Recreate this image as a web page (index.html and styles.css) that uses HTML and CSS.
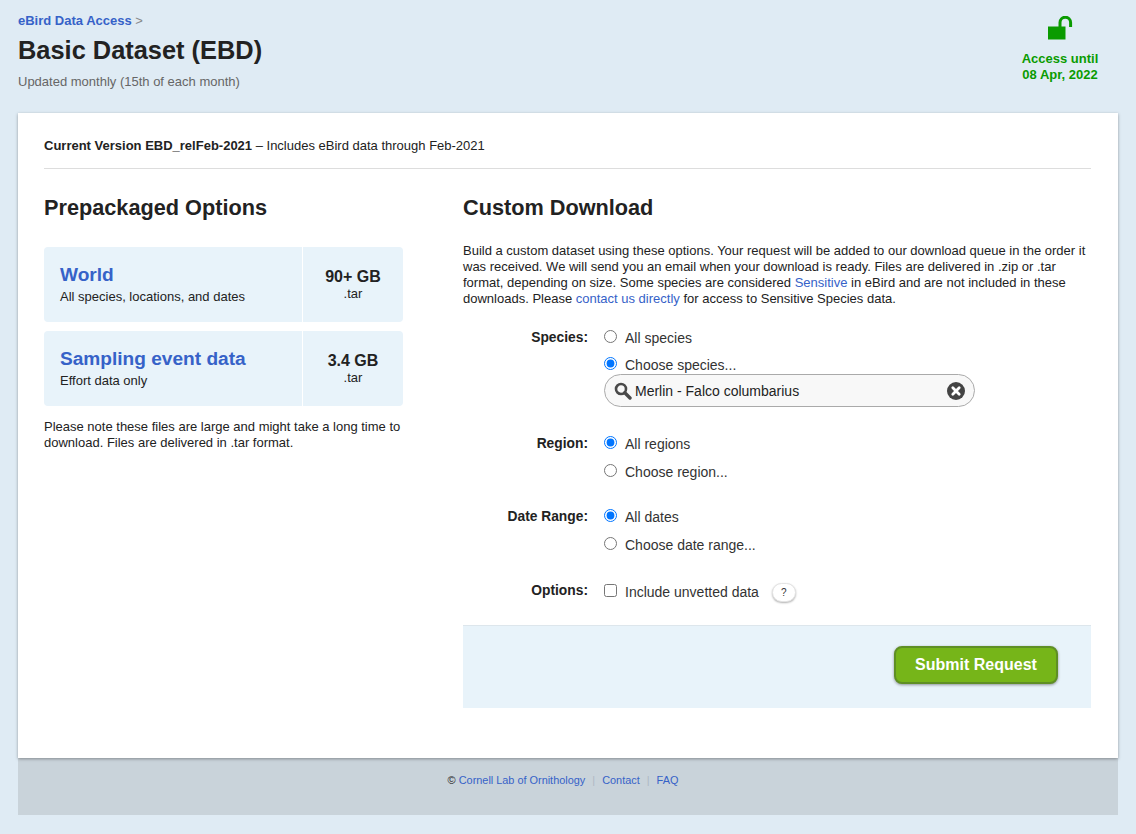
FILE: index.html
```html
<!DOCTYPE html>
<html lang="en">
  <head>
    <meta charset="UTF-8" />
    <meta name="viewport" content="width=device-width, initial-scale=1.0" />
    <title>Basic Dataset (EBD)</title>
    <link rel="stylesheet" href="styles.css">
  </head>
  <body>
    <header class="page-head">
      <div>
        <div class="crumb"><a href="#">eBird Data Access</a> &gt;</div>
        <h1>Basic Dataset (EBD)</h1>
        <p class="updated">Updated monthly (15th of each month)</p>
      </div>
      <div class="access">
        <svg class="lock" width="26" height="24" viewBox="0 0 26 24">
          <path fill="#0a9b00" d="M1 10.500h17.500v13H1z" />
          <path fill="none" stroke="#0a9b00" stroke-width="3" d="M13 11V6.500a5.300 5.300 0 0 1 10.600 0V11" />
        </svg>
        <div>Access until<br />08 Apr, 2022</div>
      </div>
    </header>

    <main class="card">
      <p class="version"><strong>Current Version EBD_relFeb-2021</strong> – Includes eBird data through Feb-2021</p>
      <div class="columns">
        <section class="prepack">
          <h2>Prepackaged Options</h2>
          <div class="package">
            <div class="package-info">
              <a href="#">World</a>
              <span>All species, locations, and dates</span>
            </div>
            <div class="package-size"><b>90+ GB</b><span>.tar</span></div>
          </div>
          <div class="package">
            <div class="package-info">
              <a href="#">Sampling event data</a>
              <span>Effort data only</span>
            </div>
            <div class="package-size"><b>3.4 GB</b><span>.tar</span></div>
          </div>
          <p class="note">Please note these files are large and might take a long time to download. Files are delivered in .tar format.</p>
        </section>

        <section class="custom">
          <h2>Custom Download</h2>
          <p class="intro">Build a custom dataset using these options. Your request will be added to our download queue in the order it was received. We will send you an email when your download is ready. Files are delivered in .zip or .tar format, depending on size. Some species are considered <a href="#">Sensitive</a> in eBird and are not included in these downloads. Please <a href="#">contact us directly</a> for access to Sensitive Species data.</p>

          <div class="field field-species">
            <div class="field-label">Species:</div>
            <div class="field-inputs">
              <label class="choice"><input type="radio" name="species" /> All species</label>
              <label class="choice"><input type="radio" name="species" checked /> Choose species...</label>
              <div class="species-box">
                <svg width="18" height="18" viewBox="0 0 18 18">
                  <circle cx="7" cy="7" r="5" fill="none" stroke="#4a4a4a" stroke-width="2.600" />
                  <path d="M10.800 10.800L16 16" stroke="#4a4a4a" stroke-width="3.400" stroke-linecap="round" />
                </svg>
                <span class="species-name">Merlin - Falco columbarius</span>
                <svg width="18" height="18" viewBox="0 0 18 18">
                  <circle cx="9" cy="9" r="9" fill="#444" />
                  <path d="M5.800 5.800l6.400 6.400M12.200 5.800l-6.400 6.400" stroke="#fff" stroke-width="2.800" stroke-linecap="round" />
                </svg>
              </div>
            </div>
          </div>

          <div class="field field-region">
            <div class="field-label">Region:</div>
            <div class="field-inputs">
              <label class="choice"><input type="radio" name="region" checked /> All regions</label>
              <label class="choice"><input type="radio" name="region" /> Choose region...</label>
            </div>
          </div>

          <div class="field field-date">
            <div class="field-label">Date Range:</div>
            <div class="field-inputs">
              <label class="choice"><input type="radio" name="date" checked /> All dates</label>
              <label class="choice"><input type="radio" name="date" /> Choose date range...</label>
            </div>
          </div>

          <div class="field field-options">
            <div class="field-label">Options:</div>
            <div class="field-inputs">
              <label class="choice"><input type="checkbox" /> Include unvetted data <span class="help">?</span></label>
            </div>
          </div>

          <div class="submit-bar">
            <button type="button">Submit Request</button>
          </div>
        </section>
      </div>
    </main>

    <footer class="page-foot">
      <span class="copy">©</span> <a href="#">Cornell Lab of Ornithology</a>
      <span class="sep">|</span> <a href="#">Contact</a>
      <span class="sep">|</span> <a href="#">FAQ</a>
    </footer>
  </body>
</html>
```

FILE: styles.css
```css
* {
  margin: 0;
  padding: 0;
  box-sizing: border-box;
  font-family: "Liberation Sans", Arial, sans-serif;
}

body {
  background-color: #dfebf4;
  color: #222;
  font-size: 13px;
  line-height: 15px;
  padding: 0 18px;
}

a {
  color: #3662c8;
  text-decoration: none;
}

.page-head {
  display: flex;
  justify-content: space-between;
  height: 113px;
  padding-top: 13px;
}

.crumb {
  color: #888;
}

.crumb a {
  font-weight: bold;
}

h1 {
  font-size: 25.400px;
  line-height: 30px;
  margin-top: 7px;
  color: #222;
}

.updated {
  margin-top: 9px;
  color: #666;
}

.access {
  width: 116px;
  padding-top: 3px;
  text-align: center;
  color: #0a9b00;
  font-weight: bold;
  line-height: 16px;
}

.lock {
  display: block;
  margin: 0 auto 11px;
}

.card {
  height: 645px;
  background: #ffffff;
  padding: 0 27px 0 26px;
  box-shadow: 0 1px 3px rgba(0, 0, 0, 0.35);
  position: relative;
}

.version {
  padding: 25px 0 15px;
  border-bottom: 1px solid #ddd;
}

.columns {
  display: flex;
  gap: 60px;
}

h2 {
  font-size: 21.700px;
  line-height: 26px;
  margin-top: 26px;
  color: #222;
}

.prepack {
  width: 359px;
}

.package {
  display: flex;
  height: 75px;
  margin-top: 9px;
  background: #e8f3fa;
  border-radius: 4px;
}

h2 + .package {
  margin-top: 26px;
}

.package-info {
  flex: 1;
  display: flex;
  flex-direction: column;
  padding: 16px 16px 0;
  border-right: 1px solid #fff;
}

.package-info a {
  font-size: 19.100px;
  line-height: 23px;
  font-weight: bold;
}

.package-info span {
  margin-top: 3px;
}

.package-size {
  width: 100px;
  display: flex;
  flex-direction: column;
  align-items: center;
  padding-top: 20px;
}

.package-size b {
  font-size: 16px;
  line-height: 19px;
}

.note {
  margin-top: 13px;
  line-height: 16px;
}

.custom {
  width: 628px;
}

.intro {
  margin-top: 22px;
  line-height: 16px;
}

.field {
  display: flex;
}

.field-species {
  margin-top: 22px;
}

.field-region {
  margin-top: 28px;
}

.field-date {
  margin-top: 27px;
}

.field-options {
  margin-top: 29px;
}

.field-label {
  width: 125px;
  text-align: right;
  font-size: 13.800px;
  font-weight: bold;
  line-height: 18px;
}

.field-options .field-label {
  margin-top: -1px;
}

.field-inputs {
  margin-left: 16px;
  flex: 1;
}

.choice {
  display: flex;
  align-items: center;
  height: 18px;
  margin-bottom: 10px;
  font-size: 14px;
  color: #333;
}

.choice:last-child {
  margin-bottom: 0;
}

.choice input {
  width: 13px;
  height: 13px;
  margin: -3px 8px 0 0;
  accent-color: #0075ff;
}

.field-species .choice:first-child {
  margin-bottom: 9px;
}

.field-species .choice + .choice {
  margin-bottom: 0;
}

.species-box {
  display: flex;
  align-items: center;
  width: 371px;
  height: 33px;
  padding: 0 9px;
  background: #f8f8f8;
  border: 1px solid #aaa;
  border-radius: 17px;
}

.species-name {
  flex: 1;
  margin: 2px 0 0 3px;
  font-size: 14px;
  color: #222;
}

.help {
  display: inline-block;
  width: 24px;
  height: 19px;
  margin-left: 13px;
  background: #fff;
  border: 1px solid #e4e4e4;
  border-radius: 10px;
  box-shadow: 0 1px 2px rgba(0, 0, 0, 0.3);
  font-size: 10px;
  line-height: 17px;
  text-align: center;
}

.submit-bar {
  display: flex;
  justify-content: flex-end;
  height: 83px;
  margin-top: 24px;
  padding: 20px 33px 0 0;
  background: #e8f3fa;
  border-top: 1px solid #dde6ec;
}

button {
  width: 164px;
  height: 38px;
  background-color: #76b519;
  color: white;
  border: 2px solid #5f8f24;
  border-radius: 8px;
  font-size: 16px;
  font-weight: bold;
  box-shadow: 0 1px 3px rgba(0, 0, 0, 0.4);
  cursor: pointer;
}

.page-foot {
  height: 57px;
  padding: 15px 10px 0 0;
  background: #c9d3da;
  text-align: center;
  font-size: 10.900px;
  line-height: 15px;
}

.copy {
  font-size: 11px;
}

.sep {
  color: #aeb9c4;
  margin: 0 4px;
}
```
